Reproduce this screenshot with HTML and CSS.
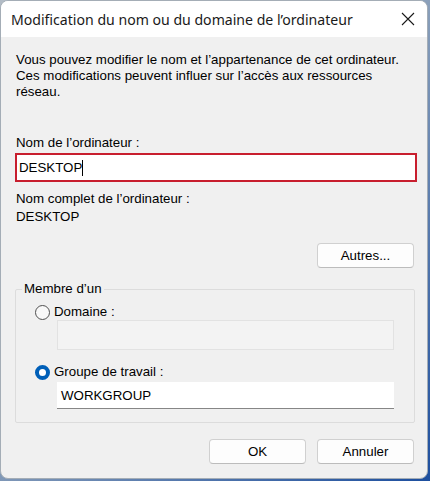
FILE: index.html
```html
<!DOCTYPE html>
<html lang="fr">
<head>
    <meta charset="UTF-8">
    <title>Modification du nom ou du domaine de l'ordinateur</title>
    <link rel="stylesheet" href="styles.css">
</head>
<body>

    <div class="window">
        <div class="titlebar">
            <span class="title">Modification du nom ou du domaine de l’ordinateur</span>
            <svg class="close" width="14" height="14" viewBox="0 0 14 14">
                <path d="M1 1 L13 13 M13 1 L1 13" stroke="#1a1a1a" stroke-width="1.1" fill="none"/>
            </svg>
        </div>

        <div class="content">
            <p class="intro">Vous pouvez modifier le nom et l’appartenance de cet ordinateur. Ces modifications peuvent influer sur l’accès aux ressources réseau.</p>

            <label class="label label-name">Nom de l’ordinateur :</label>
            <div class="input input-name">DESKTOP<span class="caret"></span></div>

            <div class="label label-full">Nom complet de l’ordinateur :</div>
            <div class="label">DESKTOP</div>

            <div class="row-right row-more">
                <button class="button">Autres...</button>
            </div>

            <fieldset class="group">
                <legend>Membre d’un</legend>

                <div class="radio-row">
                    <span class="radio"></span>
                    <span>Domaine :</span>
                </div>
                <div class="input input-sub input-disabled"></div>

                <div class="radio-row radio-row-2">
                    <span class="radio radio-checked"></span>
                    <span>Groupe de travail :</span>
                </div>
                <div class="input input-sub input-work">WORKGROUP</div>
            </fieldset>

            <div class="row-right row-actions">
                <button class="button">OK</button>
                <button class="button">Annuler</button>
            </div>
        </div>
    </div>

</body>
</html>
```

FILE: styles.css
```css
body {
    margin: 0;
    width: 430px;
    height: 481px;
    background: linear-gradient(135deg, #b3bcc6 0%, #8fa3bb 45%, #1d4f9f 100%);
    font-family: 'Liberation Sans', Arial, sans-serif;
    font-size: 13.3px;
    color: #000;
}

.window {
    box-sizing: border-box;
    width: 428px;
    height: 479px;
    border: 1px solid #a4adb6;
    border-radius: 8px;
    overflow: hidden;
    background-color: #f0f0f0;
}

.titlebar {
    height: 36px;
    background-color: #fff;
    display: flex;
    align-items: center;
    justify-content: space-between;
    padding: 0 12px 0 10px;
}

.title {
    font-family: 'Noto Sans', sans-serif;
    font-size: 14.1px;
    color: #1a1a1a;
}

.close {
    display: block;
}

.content {
    padding: 15px 10px 0 14px;
}

.intro {
    margin: 0 0 0 1px;
    line-height: 16px;
    width: 395px;
}

.label {
    display: block;
    line-height: 16px;
    margin-left: 1px;
}

.label-name {
    margin-top: 35px;
}

.label-full {
    margin-top: 9px;
}

.label-full + .label {
    margin-top: 2px;
}

.input {
    box-sizing: border-box;
    background-color: #fff;
    display: flex;
    align-items: center;
}

.input-name {
    width: 402px;
    height: 29px;
    margin-top: 2px;
    border: 2px solid #c81e2e;
    padding-left: 2px;
}

.caret {
    display: inline-block;
    width: 1px;
    height: 16px;
    background-color: #000;
}

.row-right {
    display: flex;
    justify-content: flex-end;
    gap: 11px;
    width: 399px;
}

.row-more {
    margin-top: 18px;
}

.button {
    box-sizing: border-box;
    width: 97px;
    height: 25px;
    background-color: #fdfdfd;
    border: 1px solid #d0d0d0;
    border-bottom-color: #bcbcbc;
    border-radius: 4px;
    font-family: 'Liberation Sans', Arial, sans-serif;
    font-size: 13.3px;
    color: #000;
    padding: 0;
}

.group {
    box-sizing: border-box;
    width: 400px;
    margin: 13px 0 0 0;
    padding: 0 0 13px 0;
    border: 1px solid #dcdcdc;
    border-radius: 2px;
}

.group legend {
    margin-left: 6px;
    padding: 0 2px;
    line-height: 16px;
}

.radio-row {
    display: flex;
    align-items: center;
    gap: 4px;
    margin: 7px 0 0 19px;
    line-height: 16px;
}

.radio-row-2 {
    margin-top: 14px;
}

.radio {
    box-sizing: border-box;
    width: 15px;
    height: 15px;
    border: 1px solid #505050;
    border-radius: 50%;
    background-color: #f8f8f8;
}

.radio-checked {
    border: 4.5px solid #005fb8;
    background-color: #fff;
}

.input-sub {
    width: 337px;
    margin-left: 41px;
}

.input-disabled {
    height: 30px;
    margin-top: 0;
    background-color: #f3f3f3;
    border: 1px solid #e2e2e2;
}

.input-work {
    height: 27px;
    margin-top: 2px;
    border-bottom: 1px solid #868686;
    padding-left: 4px;
}

.row-actions {
    margin-top: 16px;
}
```
